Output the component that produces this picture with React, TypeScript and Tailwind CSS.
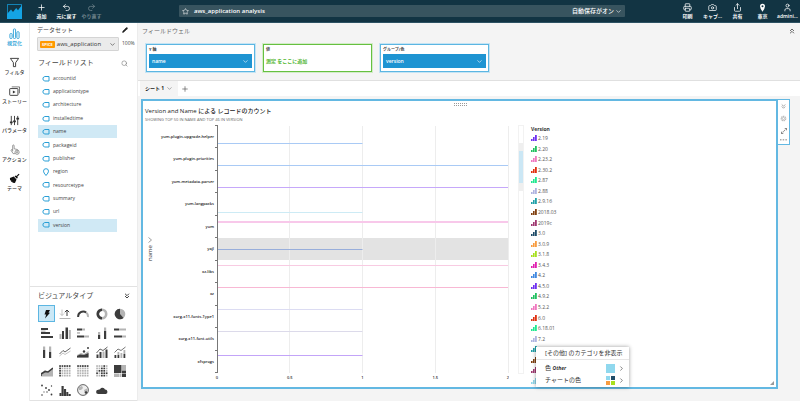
import React from 'react';
import {
  Camera, ChevronDown, ChevronRight, ChevronsDown, ChevronsUp, MapPin, Pencil, Plus,
  Printer, Redo2, Search, Share, Star, Undo2, User,
} from 'lucide-react';

const FIELDS = [
  'accountid', 'applicationtype', 'architecture', 'installedtime', 'name', 'packageid',
  'publisher', 'region', 'resourcetype', 'summary', 'url', 'version',
];
const SELECTED = ['name', 'version'];

// the last entries sit under the colour menu, only their swatches show
const LEGEND = [
  { label: '2.19', color: '#7030f0' },
  { label: '2.20', color: '#22c060' },
  { label: '2.23.2', color: '#f078c0' },
  { label: '2.30.2', color: '#e03010' },
  { label: '2.87', color: '#20e890' },
  { label: '2.88', color: '#b0b4e0' },
  { label: '2.9.16', color: '#20a0a8' },
  { label: '2018.03', color: '#804010' },
  { label: '2019c', color: '#a03870' },
  { label: '3.0', color: '#204c68' },
  { label: '3.0.9', color: '#f89c40' },
  { label: '3.1.8', color: '#a8e020' },
  { label: '3.4.3', color: '#e020b0' },
  { label: '4.2', color: '#4088e0' },
  { label: '4.5.0', color: '#7030f0' },
  { label: '4.9.2', color: '#22c060' },
  { label: '5.2.2', color: '#f078c0' },
  { label: '6.0', color: '#e03010' },
  { label: '6.18.01', color: '#20e890' },
  { label: '7.2', color: '#b0b4e0' },
  { label: '', color: '#20a0a8' },
  { label: '', color: '#804010' },
  { label: '', color: '#a03870' },
  { label: '', color: '#90d8ec' },
];

// y is the position of the bar inside its category band
const ROWS = [
  { label: 'yum-plugin-upgrade-helper', y: 143, value: 1, color: '#a9caf5' },
  { label: 'yum-plugin-priorities', y: 165, value: 2, color: '#a9caf5' },
  { label: 'yum-metadata-parser', y: 187, value: 2, color: '#c6a8fa' },
  { label: 'yum-langpacks', y: 212, value: 1, color: '#cdebf5' },
  { label: 'yum', y: 221, value: 2, color: '#f8c8ea', thick: true },
  { label: 'yajl', y: 249, value: 1, color: '#98aedb' },
  { label: 'xz-libs', y: 265, value: 2, color: '#f8cbe2' },
  { label: 'xz', y: 287, value: 2, color: '#f8b8d4' },
  { label: 'xorg-x11-fonts-Type1', y: 309, value: 1, color: '#dcdcf2' },
  { label: 'xorg-x11-font-utils', y: 331, value: 1, color: '#dcdaea' },
  { label: 'xfsprogs', y: 355, value: 1, color: '#c3a4f8' },
];

const RAIL = [
  {
    label: '視覚化', active: true,
    icon: <g fill="none" stroke="currentColor"><rect x="1" y="6" width="2.4" height="5.5" rx="1" /><rect x="4.8" y="1" width="2.4" height="10.5" rx="1" /><rect x="8.6" y="4" width="2.4" height="7.5" rx="1" /></g>,
  },
  {
    label: 'フィルタ',
    icon: <path d="M1.5 1.5h9L7.2 6.2v4.3H4.8V6.2z" fill="none" stroke="currentColor" />,
  },
  {
    label: 'ストーリー',
    icon: <g fill="none" stroke="currentColor"><path d="M3 1h8.5v7" strokeWidth=".7" /><rect x=".8" y="2.8" width="9" height="7.4" rx=".6" /><path d="M4.2 4.8v3.4L7.2 6.500z" fill="currentColor" stroke="none" /></g>,
  },
  {
    label: 'パラメータ',
    icon: <g stroke="currentColor"><path d="M2.500 1v10M6 1v10M9.500 1v10" /><path d="M1 8h3M4.500 7h3M8 4h3" strokeWidth="1.800" /></g>,
  },
  {
    label: 'アクション',
    icon: <g fill="none" stroke="#777" strokeWidth=".8"><path d="M4 8V2q0-1 .8-1t.8 1v3.200l3.400.8q1 .3.900 1.300M4 6.500q-1.700-.7-1.900.2L4.500 10.500h2" /><circle cx="8.800" cy="9" r="2.300" /><circle cx="8.800" cy="9" r=".8" /></g>,
  },
  {
    label: 'テーマ',
    icon: <g fill="#111"><path d="M1 5.500L5.200 3.800 8.200 7 6.500 11 4 10.700 3.500 9.600 2.500 9.700 2.300 8.300 1.200 8z" /><path d="M6 3.500L7.500 2.600 8.200 3.200 10.500.7l1 1L9 4l.6.800-.9 1.500z" /></g>,
  },
];

const D = '#3c3c3c';
const G = '#b4b4b4';

const dots = (dark: (c: number, r: number) => boolean) =>
  Array.from({ length: 25 }, (_, i) => {
    const c = i % 5;
    const r = Math.floor(i / 5);
    return <rect key={i} x={c * 2.4 + 0.2} y={r * 2.4 + 0.2} width="1.7" height="1.7" fill={dark(c, r) ? D : G} />;
  });

const VISUALS: { name: string; icon: React.ReactNode }[] = [
  { name: 'auto', icon: <path d="M5 2h4L7.500 4.800H9L4 10.500 5.200 6.500H3.500z" fill="#111" /> },
  { name: 'kpi', icon: <g fill="none"><path d="M3 1.500v6M1 5.500l2 2 2-2" stroke={G} strokeWidth=".8" /><path d="M8 8V2M5.800 4.200L8 2l2.200 2.200" stroke={D} /><path d="M.5 10.500h11" stroke={G} /></g> },
  { name: 'gauge', icon: <g fill="none" strokeWidth="2"><path d="M1.200 9a5 5 0 0 1 8-4.500" stroke={D} /><path d="M9.200 4.500A5 5 0 0 1 10.900 9" stroke={G} /></g> },
  { name: 'donut', icon: <g fill="none" strokeWidth="2.600"><circle cx="6" cy="6" r="4.200" stroke={G} /><path d="M6 10.200a4.200 4.200 0 1 1 0-8.400" stroke={D} /></g> },
  { name: 'pie', icon: <g><circle cx="6" cy="6" r="5.300" fill={G} /><path d="M6 6V.7a5.300 5.300 0 1 0 3.500 9.300z" fill={D} /></g> },

  { name: 'hbar', icon: <g fill={D}><rect y="1" width="7" height="2" /><rect y="3.500" width="4.500" height="1.200" fill={G} /><rect y="5" width="9" height="2" /><rect y="9" width="12" height="2" /></g> },
  { name: 'vbar', icon: <g fill={D}><rect x=".5" y="7" width="2" height="5" fill={G} /><rect x="3" y="4" width="2" height="8" /><rect x="6.500" y=".5" width="2.500" height="11.500" /><rect x="9.800" y="3" width="2" height="9" fill={G} /></g> },
  { name: 'hstack', icon: <g fill={D}><rect y="1.500" width="5" height="2" /><rect x="5" y="1.500" width="3" height="2" fill={G} /><rect y="5.200" width="3" height="1.500" fill={G} /><rect y="8.500" width="7" height="2" /><rect x="7" y="8.500" width="5" height="2" fill={G} /></g> },
  { name: 'vstack', icon: <g fill={D}><rect x="2" y="8" width="2.200" height="4" /><rect x="2" y="5" width="2.200" height="3" fill={G} /><rect x="8" y="4" width="2.200" height="8" /><rect x="8" y=".5" width="2.200" height="3.500" fill={G} /></g> },
  { name: 'hstack100', icon: <g fill={D}><rect y="1.500" width="5" height="2" /><rect x="5" y="1.500" width="7" height="2" fill={G} /><rect y="8.500" width="8" height="2" /><rect x="8" y="8.500" width="4" height="2" fill={G} /></g> },

  { name: 'vstack100', icon: <g fill={D}><rect x="2" y="4" width="2.200" height="8" /><rect x="2" y=".5" width="2.200" height="3.500" fill={G} /><rect x="8" y="6" width="2.200" height="6" /><rect x="8" y=".5" width="2.200" height="5.500" fill={G} /></g> },
  { name: 'line', icon: <g fill="none"><path d="M.5 8L4 4.500l2 1.500 5.500-4" stroke={D} strokeWidth=".8" /><path d="M.5 10L4 7l2 1.500L11.500 5" stroke={G} strokeWidth=".8" /></g> },
  { name: 'scatterline', icon: <g><path d="M0 11.500V9l4-2 3 1 4.500-3v6.500z" fill={G} /><path d="M0 11.500V10l3-1.500 4 .5 4.500-2v4.500z" fill={D} /><circle cx="7" cy="5.500" r="1.200" fill={D} /><circle cx="11" cy="2" r="1" fill={D} /></g> },
  { name: 'combo', icon: <g><path d="M.5 7L4 3l3 1.500L11.500 1" fill="none" stroke={D} strokeWidth=".8" /><rect x=".5" y="8.500" width="2" height="3.500" fill={D} /><rect x="3.500" y="6" width="2" height="6" fill={D} /><rect x="6.500" y="5.500" width="2" height="6.500" fill={G} /><rect x="9.500" y="3.500" width="2" height="8.500" fill={D} /></g> },
  { name: 'combostack', icon: <g><path d="M.5 6.500L4 3l3 1.500L11.500 1" fill="none" stroke={D} strokeWidth=".7" /><rect x=".5" y="9" width="1.800" height="3" fill={D} /><rect x="3.500" y="6" width="1.800" height="3" fill={G} /><rect x="3.500" y="9" width="1.800" height="3" fill={D} /><rect x="6.500" y="7" width="1.800" height="5" fill={G} /><rect x="9.500" y="4" width="1.800" height="4" fill={G} /><rect x="9.500" y="8" width="1.800" height="4" fill={D} /></g> },

  { name: 'area', icon: <g><path d="M0 11.500V8.500L4 5l3 1.500L12 3v8.500z" fill={G} /><path d="M0 11V9l4-2.500 3 .500 5-4" fill="none" stroke={D} strokeWidth="1.600" /></g> },
  { name: 'pivot', icon: <>{dots((c, r) => c === 0 || r === 0)}</> },
  { name: 'table', icon: <>{dots((_, r) => r === 0)}</> },
  { name: 'heatmap', icon: <>{dots((c, r) => (c > 1 && c < 4 && r > 0) || (c + r) % 4 === 3)}</> },
  { name: 'treemap', icon: <g fill={D}><rect width="7.500" height="8" /><rect x="8" width="4" height="5" fill={G} /><rect x="8" y="5.500" width="4" height="2.500" /><rect y="8.500" width="5" height="3.500" fill={G} /><rect x="5.500" y="8.500" width="2" height="3.500" fill={G} /><rect x="8" y="8.500" width="4" height="3.500" /></g> },

  { name: 'points', icon: <g fill={D}><circle cx="1" cy="1.500" r=".9" /><circle cx="5" cy="4" r=".9" /><circle cx="10.500" cy="2" r=".7" /><circle cx="8" cy="6" r=".9" /><circle cx="3" cy="8" r=".9" fill={G} /><circle cx="6" cy="8" r=".7" /><circle cx="1" cy="11" r=".8" /><circle cx="10.500" cy="10.500" r=".9" /></g> },
  { name: 'histogram', icon: <g fill={D}><rect x=".5" y="9" width="2" height="3" /><rect x="2.500" y="2" width="2.200" height="10" /><rect x="4.900" y="5" width="2.200" height="7" /><rect x="7.300" y="8" width="2" height="4" /><rect x="9.500" y="10" width="2.200" height="2" /></g> },
  { name: 'globe', icon: <g><circle cx="6" cy="6" r="5.400" fill="#eee" stroke={D} strokeWidth=".8" /><path d="M2 3l3-1 1 2-2 2-2 0zM7 6l3-1.500.8 2L9 9.500 7.500 8z" fill={G} /><circle cx="9" cy="8.500" r="1.300" fill={D} /></g> },
  { name: 'cloud', icon: <path d="M2.200 10a2 2 0 0 1 0-4.200L4 5.200A2.800 2.800 0 0 1 9 5.500a2.300 2.300 0 0 1 .8 4.500z" fill={D} /> },
];

const FieldIcon = ({ pin }: { pin: boolean }) => (
  <svg viewBox="0 0 8 8" className="h-2 w-2 shrink-0" fill="none" stroke="#2a9fd6">
    {pin
      ? <path d="M4 7.500Q1.500 4.800 1.500 3.200a2.500 2.500 0 0 1 5 0Q6.500 4.800 4 7.500z" />
      : <path d="M2.800 1.500h4.200v4.500H2.800L1 4.800V2.700z" />}
  </svg>
);

const PinIcon = () => (
  <svg viewBox="0 0 9 9" className="h-[9px] w-[9px]" fill="currentColor" fillRule="evenodd">
    <path d="M4.500 8.800Q2 5 2 3.200a2.500 2.500 0 0 1 5 0Q7 5 4.500 8.800zM4.500 4.200a1 1 0 1 0 0-2 1 1 0 0 0 0 2z" />
  </svg>
);

const HeaderButton = ({ icon: Icon, label, dim }: { icon: React.ElementType; label: string; dim?: boolean }) => (
  <button className={`flex w-[25px] flex-col items-center gap-px text-[5px] font-semibold leading-[7px] whitespace-nowrap ${dim ? 'text-[#71858e]' : 'text-white'}`}>
    <Icon size={9} strokeWidth={2} />
    {label}
  </button>
);

const Header = () => (
  <header className="flex h-[23px] items-center border-b border-[#2d5263] bg-[#123443] pl-[7px]">
    <svg viewBox="0 0 15 15" className="mr-[7px] h-[15px] w-[15px] shrink-0">
      <rect width="15" height="15" fill="#14a3e4" />
      <path d="M0 10L4 5.500 6 8l3.200-4L11 6.200 15 1V0H0z" fill="#123443" />
      <path d="M.4 10V.4h14.200V2" fill="none" stroke="#14a3e4" strokeWidth=".8" />
    </svg>
    <HeaderButton icon={Plus} label="追加" />
    <HeaderButton icon={Undo2} label="元に戻す" />
    <HeaderButton icon={Redo2} label="やり直す" dim />
    <div className="mr-[50px] ml-[75px] flex h-3 flex-1 items-center rounded-[1px] bg-[#38545f] px-[3px] text-[6px] font-medium text-white">
      <Star size={7} className="mr-[5px]" />
      <h1 className="flex-1 font-semibold">aws_application analysis</h1>
      <button className="flex items-center gap-px">
        自動保存がオン
        <ChevronDown size={7} />
      </button>
    </div>
    <HeaderButton icon={Printer} label="印刷" />
    <HeaderButton icon={Camera} label="キャプ..." />
    <HeaderButton icon={Share} label="共有" />
    <HeaderButton icon={PinIcon} label="東京" />
    <HeaderButton icon={User} label="admini..." />
  </header>
);

const Rail = () => (
  <nav className="flex w-[30px] shrink-0 flex-col border-r border-[#ececec] bg-white pt-[5px]">
    {RAIL.map(item => (
      <button
        key={item.label}
        className={`flex h-[29px] flex-col items-center gap-px text-[5px] font-medium leading-[7px] whitespace-nowrap ${item.active ? 'text-[#2a9fd6]' : 'text-[#333]'}`}
      >
        <svg viewBox="0 0 12 12" className="h-[11px] w-[11px]">{item.icon}</svg>
        {item.label}
      </button>
    ))}
  </nav>
);

const DataPanel = () => (
  <aside className="flex w-[108px] shrink-0 flex-col border-r border-[#ececec] bg-white text-[#444]">
    <div className="flex h-[14px] items-center justify-between pr-[9px] pl-[7px] text-[6px]">
      <span>データセット</span>
      <button aria-label="edit"><Pencil size={6} fill="#222" className="text-[#222]" /></button>
    </div>
    <div className="flex items-center pl-[7px]">
      <button className="flex h-[14px] w-[82px] items-center rounded-[1px] border border-[#d4d4d4] bg-[#ebebeb] px-[2px] text-[6px] font-medium text-[#333]">
        <span className="mr-[2px] rounded-[1px] bg-[#ff9900] px-[2px] text-[4px] font-bold leading-[7px] text-white">SPICE</span>
        <span className="flex-1 text-left">aws_application</span>
        <ChevronDown size={7} />
      </button>
      <span className="pl-[3px] text-[5px]">100%</span>
    </div>
    <div className="mt-1 flex h-4 items-center justify-between pr-[9px] pl-[8px]">
      <h2 className="text-[7px]">フィールドリスト</h2>
      <button aria-label="search"><Search size={7} className="text-[#777]" /></button>
    </div>
    <ul className="mt-px flex h-[160px] flex-col justify-between pr-[20px] pl-[8px] text-[5px]">
      {FIELDS.map(name => (
        <li
          key={name}
          className={`flex h-[13px] items-center gap-[3px] pl-1 ${SELECTED.includes(name) ? 'bg-[#d0e9f5]' : ''}`}
        >
          <FieldIcon pin={name === 'region'} />
          {name}
        </li>
      ))}
    </ul>
    <section className="mt-auto border-y border-[#e2e2e2] pb-[2px]">
      <div className="flex h-[18px] items-center justify-between pr-[6px] pl-[8px]">
        <h2 className="text-[7px]">ビジュアルタイプ</h2>
        <button aria-label="collapse"><ChevronsDown size={8} strokeWidth={3} /></button>
      </div>
      <div className="grid grid-cols-5 gap-y-[2px] pr-[7px] pl-[8px]">
        {VISUALS.map((v, i) => (
          <button
            key={v.name}
            aria-label={v.name}
            className={`flex h-[17px] w-[17px] items-center justify-center ${i === 0 ? 'border border-[#5cb6e2] bg-[#cbe8f6]' : ''}`}
          >
            <svg viewBox="0 0 12 12" className="h-[12px] w-[12px]">{v.icon}</svg>
          </button>
        ))}
      </div>
    </section>
  </aside>
);

const Well = ({ title, value }: { title: string; value?: string }) => (
  <div className={`h-7 w-[109px] border bg-white px-[2px] pt-px text-[4px] font-bold leading-[8px] text-[#444] ${value ? 'border-[#5cb6e2] shadow-[0_0_0_1px_#c5e4f4]' : 'border-[#66c040] shadow-[0_0_0_1px_#d3ecc8]'}`}>
    {title}
    {value ? (
      <button className="flex h-[14px] w-full items-center justify-between bg-[#1e94d2] px-[3px] text-[5px] font-semibold text-white">
        {value}
        <ChevronDown size={7} />
      </button>
    ) : (
      <p className="text-[5px] font-semibold leading-[14px] text-[#4fb52c]">測定 をここに追加</p>
    )}
  </div>
);

const Chart = () => {
  const band = 22.45;
  const xOf = (v: number) => 217 + v * 145.5;
  return (
    <svg viewBox="145 124 364 258" className="h-[258px] w-[364px] shrink-0">
      <rect x="217" y="238" width="291" height="22" fill="#e3e3e3" />
      {[0.5, 1, 1.5, 2].map(v => (
        <rect key={v} x={Math.floor(xOf(v))} y="126" width="1" height="247" fill="#ededed" />
      ))}
      {ROWS.map((row, i) => (
        <g key={row.label}>
          <rect x="217" y={row.y} width={xOf(row.value) - 217} height={row.thick ? 2 : 1} fill={row.color} />
          <text x="214" y={138 + i * band} fontSize="4" textAnchor="end" fill="#222" fontWeight="600">{row.label}</text>
        </g>
      ))}
      <rect x="217" y="125" width="1" height="248" fill="#777" />
      {Array.from({ length: 12 }, (_, i) => (
        <rect key={i} x="215" y={Math.round(125 + i * band)} width="2" height="1" fill="#777" />
      ))}
      {[0, 0.5, 1, 1.5, 2].map(v => (
        <text key={v} x={xOf(v)} y="379" fontSize="4" textAnchor="middle" fill="#333" fontWeight="600">{v}</text>
      ))}
      <text transform="translate(152 261) rotate(-90)" fontSize="6" fill="#333" fontWeight="500">name</text>
      <path d="M148.500 237.500l3 2.500-3 2.500" fill="none" stroke="#888" strokeWidth=".8" />
    </svg>
  );
};

const LegendIcon = ({ color }: { color: string }) => (
  <svg viewBox="0 0 6 6" className="h-[6px] w-[6px]" fill={color}>
    <rect y="4" width="1.600" height="2" />
    <rect x="2" y="2" width="1.600" height="4" />
    <rect x="4" width="1.800" height="6" />
  </svg>
);

const ColorMenu = () => (
  <div className="absolute right-[147px] bottom-0 w-[93px] bg-white pb-px text-[6px] text-[#333] shadow-[0_0_4px_rgba(0,0,0,0.4)]">
    <button className="block h-[13px] w-full border-b border-[#e6e6e6] pl-[9px] text-left leading-[13px] whitespace-nowrap">[その他] のカテゴリを非表示</button>
    <button className="mt-[2px] flex h-3 w-full items-center pr-1 pl-[9px]">
      <span className="flex-1 text-left">色 <b className="text-[5px] italic">Other</b></span>
      <span className="mr-[3px] h-[9px] w-[9px] bg-[#90d8ee]" />
      <ChevronRight size={7} />
    </button>
    <button className="flex h-3 w-full items-center pr-1 pl-[9px]">
      <span className="flex-1 text-left">チャートの色</span>
      <span className="mr-[3px] grid h-[9px] w-[9px] grid-cols-2 gap-px">
        <i className="bg-[#90d8ee]" />
        <i className="bg-[#204c68]" />
        <i className="bg-[#f89c40]" />
        <i className="bg-[#a8e020]" />
      </span>
      <ChevronRight size={7} />
    </button>
  </div>
);

const Visual = () => (
  <div className="flex items-start pt-[3px] pr-[10px] pl-[3px]">
    <section className="relative min-w-0 flex-1 border-2 border-[#63b8e2] bg-white pb-px pl-[2px]">
      <div className="flex h-[6px] items-center justify-center">
        <svg viewBox="0 0 13 3" className="h-[3px] w-[13px]" fill="#999">
          {[0, 2, 4, 6, 8, 10, 12].map(x => <path key={x} d={`M${x} 0h1v1h-1zM${x} 2h1v1h-1z`} />)}
        </svg>
      </div>
      <h2 className="text-[6px] font-medium leading-[8px] text-[#222]">Version and Name による レコードのカウント</h2>
      <p className="h-[9px] pt-px text-[4px] leading-[8px] text-[#666]">SHOWING TOP 50 IN NAME AND TOP 46 IN VERSION</p>
      <div className="flex">
        <Chart />
        <div className="mt-px ml-[9px] flex h-[249px] w-[6px] flex-col border border-[#f2f2f2] pt-[17px]">
          <div className="h-2 bg-[#efefef]" />
          <div className="h-8 bg-[#cbe7f5]" />
          <div className="h-2 bg-[#efefef]" />
        </div>
        <div className="ml-[7px] text-[5px] text-[#555]">
          <h3 className="pt-px text-[5px] font-bold leading-[8px] text-[#333]">Version</h3>
          <ul className="flex h-[253px] flex-col justify-between">
            {LEGEND.map((item, i) => (
              <li key={i} className="flex h-[10px] items-center gap-px leading-[10px]">
                <LegendIcon color={item.color} />
                {item.label}
              </li>
            ))}
          </ul>
        </div>
      </div>
      <ColorMenu />
      <svg viewBox="0 0 4 4" className="absolute right-[2px] bottom-[2px] h-1 w-1"><path d="M4 0v4H0z" fill="#999" /></svg>
    </section>
    <div className="flex h-[46px] w-3 flex-col items-center justify-around border border-l-0 border-[#63b8e2] bg-white text-[#999]">
      <button aria-label="menu"><ChevronsDown size={7} strokeWidth={3} /></button>
      <button aria-label="settings">
        <svg viewBox="0 0 8 8" className="h-[7px] w-[7px]" fill="none" stroke="#bbb"><circle cx="4" cy="4" r="2.500" strokeWidth="1.500" strokeDasharray="1.500 .5" /><circle cx="4" cy="4" r="1.200" /></svg>
      </button>
      <button aria-label="expand">
        <svg viewBox="0 0 7 7" className="h-[6px] w-[6px]" fill="#888"><path d="M3.800 0H7v3.200zM0 3.800V7h3.200z" /><path d="M4.200 2l.8.800-1 1-.8-.8zM2.800 3.400l.8.800-1 1-.8-.8z" /></svg>
      </button>
      <button aria-label="more">
        <svg viewBox="0 0 7 2" className="h-[2px] w-[7px]" fill="#aaa"><path d="M0 0h1.500v1.500H0zM2.700 0h1.500v1.500H2.700zM5.400 0h1.500v1.500H5.400z" /></svg>
      </button>
    </div>
  </div>
);

const App: React.FC = () => {
  return (
    <div className="flex min-h-screen flex-col bg-[#f4f4f4] font-['Open_Sans','Noto_Sans_CJK_JP',sans-serif]">
      <Header />
      <div className="flex flex-1">
        <Rail />
        <DataPanel />
        <main className="min-w-0 flex-1">
          <section className="border-b border-[#e0e0e0] pb-2">
            <div className="flex h-4 items-center justify-between pr-1 pl-[4px] text-[6px] text-[#666]">
              <h2>フィールドウェル</h2>
              <button aria-label="collapse"><ChevronsUp size={8} strokeWidth={3} /></button>
            </div>
            <div className="mt-[5px] flex gap-2 pl-2">
              <Well title="Y 軸" value="name" />
              <Well title="値" />
              <Well title="グループ/色" value="version" />
            </div>
          </section>
          <div className="flex h-[15px] items-center bg-white pl-[2px]">
            <button className="flex h-full items-center gap-[2px] bg-[#f4f4f4] px-[5px] text-[5px] font-bold text-[#222]">
              シート 1
              <ChevronDown size={7} className="text-[#777]" />
            </button>
            <button aria-label="add sheet" className="ml-[3px]"><Plus size={8} className="text-[#555]" /></button>
          </div>
          <Visual />
        </main>
      </div>
    </div>
  );
};

export default App;
